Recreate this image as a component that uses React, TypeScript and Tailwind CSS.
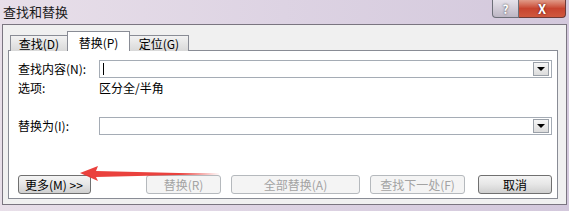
import React from 'react'

const FONT = "font-['SimSun','Noto_Sans_CJK_SC',sans-serif]"

function Combo({ caret }: { caret?: boolean }) {
  return (
    <div className="flex-1 h-[18px] border border-[#a5acb5] bg-white flex items-center justify-between pl-[3px] pr-[2px]">
      <span className={caret ? 'w-px h-[12px] bg-black' : ''} />
      <div className="w-[16px] h-[14px] border border-[#9aa0a8] bg-gradient-to-b from-[#f6f6f6] to-[#dcdcdc] flex items-center justify-center">
        <span className="w-0 h-0 border-l-[4px] border-r-[4px] border-t-[4px] border-l-transparent border-r-transparent border-t-black" />
      </div>
    </div>
  )
}

function Btn({ children, disabled, w, pl }: { children: React.ReactNode; disabled?: boolean; w: string; pl?: boolean }) {
  return (
    <div
      className={
        'h-[19px] rounded-[3px] border flex items-center text-[12px] ' +
        w + ' ' +
        (pl ? 'justify-start pl-[6px] ' : 'justify-center ') +
        (disabled
          ? 'border-[#b5b9bd] bg-[#f4f4f4] text-[#a3a3a3]'
          : 'border-[#707070] bg-gradient-to-b from-[#f4f4f4] via-[#e6e6e6] to-[#cfcfcf] text-black')
      }
    >
      {children}
    </div>
  )
}

export default function App() {
  return (
    <div className={`relative w-[569px] h-[211px] overflow-hidden bg-gradient-to-r from-[#e8dfe9] via-[#ddd3e3] to-[#d3c8dc] ${FONT}`}>
      {/* Title bar */}
      <div className="h-[24px] flex items-start justify-between">
        <span className="pl-[3px] pt-[5px] text-[13px] text-[#1a1a1a] leading-none">查找和替换</span>
        <div className="flex mr-[3px]">
          <div className="w-[27px] h-[18px] rounded-bl-[4px] border border-t-0 border-[#6d6f78] bg-gradient-to-b from-[#e6e2ea] to-[#bdb6c4] flex items-center justify-center text-[12px] text-white font-bold [text-shadow:0_0_2px_#333]">
            ?
          </div>
          <div className="w-[47px] h-[18px] rounded-br-[4px] border border-t-0 border-l-0 border-[#6d3a36] bg-gradient-to-b from-[#e09a88] via-[#c7442f] to-[#d0583e] flex items-center justify-center text-[13px] text-white font-bold [text-shadow:0_0_2px_#400]">
            X
          </div>
        </div>
      </div>

      {/* Client area */}
      <div className="mx-[2px] h-[181px] border border-[#7a7580] bg-[#f0f0f0] px-[5px] pt-[6px]">
        {/* Tabs */}
        <div className="flex items-end h-[20px] pl-[2px] text-[12px]">
          <div className="w-[58px] h-[16px] border border-b-0 border-[#898c95] bg-gradient-to-b from-[#f2f2f2] to-[#d9d9d9] flex items-center justify-center">
            查找(D)
          </div>
          <div className="w-[63px] h-[20px] -ml-px border border-b-0 border-[#898c95] bg-white flex items-start pt-[2px] justify-center relative z-10">
            替换(P)
          </div>
          <div className="w-[60px] h-[16px] -ml-px border border-b-0 border-[#898c95] bg-gradient-to-b from-[#f2f2f2] to-[#d9d9d9] flex items-center justify-center">
            定位(G)
          </div>
        </div>
        {/* Pane */}
        <div className="w-[550px] h-[149px] border border-[#898c95] bg-white -mt-px pl-[9px] pr-[5px] pt-[9px] text-[12px] text-black">
          <div className="flex items-center">
            <span className="w-[81px]">查找内容(N):</span>
            <Combo caret />
          </div>
          <div className="flex items-center mt-[1px]">
            <span className="w-[81px]">选项:</span>
            <span>区分全/半角</span>
          </div>
          <div className="flex items-center mt-[20px]">
            <span className="w-[81px]">替换为(I):</span>
            <Combo />
          </div>
          <div className="flex items-center mt-[40px]">
            <Btn w="w-[76px]" pl>更多(M) &gt;&gt;</Btn>
            <div className="ml-[55px]"><Btn disabled w="w-[75px]">替换(R)</Btn></div>
            <div className="ml-[10px]"><Btn disabled w="w-[129px]">全部替换(A)</Btn></div>
            <div className="ml-[10px]"><Btn disabled w="w-[95px]">查找下一处(F)</Btn></div>
            <div className="ml-[13px]"><Btn w="w-[74px]">取消</Btn></div>
          </div>
        </div>
      </div>

      {/* Red annotation arrow */}
      <svg className="absolute left-0 top-0 pointer-events-none" width="569" height="211">
        <polygon points="80,173 98,166 96,171 220,174 96,177 98,181" fill="#e8312c" opacity="0.92" />
      </svg>
    </div>
  )
}
